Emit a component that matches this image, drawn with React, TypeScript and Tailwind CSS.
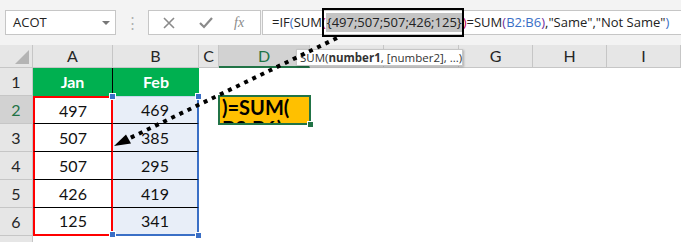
import React from 'react';

const cols = [
  { l: 'A', w: 80 },
  { l: 'B', w: 86 },
  { l: 'C', w: 20 },
  { l: 'D', w: 91 },
  { l: 'E', w: 74 },
  { l: 'F', w: 75 },
  { l: 'G', w: 74 },
  { l: 'H', w: 74 },
  { l: 'I', w: 74 },
];

const data = [
  [497, 469],
  [507, 385],
  [507, 295],
  [426, 419],
  [125, 341],
];

function Handle({ className }: { className: string }) {
  return <div className={`absolute w-[7px] h-[7px] bg-[#3a6fc6] border border-white z-10 ${className}`} />;
}

function Toolbar() {
  return (
    <div className="h-[45px] bg-[#f3f3f3] flex items-start pt-[10px] pl-[5px]" style={{ fontFamily: '"Open Sans", sans-serif' }}>
      <div className="w-[111px] h-[25px] bg-white border border-[#c6c6c6] flex items-center justify-between pl-[7px] pr-[5px] text-[13px] text-[#222]">
        <span>ACOT</span>
        <div className="w-0 h-0 border-l-[4px] border-r-[4px] border-t-[4px] border-l-transparent border-r-transparent border-t-[#777]" />
      </div>
      <div className="w-[32px] h-[25px] flex items-center justify-center text-[#b0b0b0] text-[15px]">⋮</div>
      <div className="w-[113px] h-[25px] bg-white border border-[#c6c6c6] flex items-center text-[#8a8a8a]">
        <svg width="14" height="14" viewBox="0 0 14 14" className="ml-[13px]">
          <path d="M2 2 L12 12 M12 2 L2 12" stroke="#8a8a8a" strokeWidth="1.6" />
        </svg>
        <svg width="16" height="14" viewBox="0 0 16 14" className="ml-[22px]">
          <path d="M2 7 L6 11 L14 2" stroke="#8a8a8a" strokeWidth="2.2" fill="none" />
        </svg>
        <span className="ml-[20px] text-[14px] italic" style={{ fontFamily: '"Liberation Serif", serif' }}>fx</span>
      </div>
      <div className="ml-[1px] flex-1 h-[25px] bg-white border border-[#c6c6c6] border-r-0 flex items-center pl-[9px] text-[13px] text-[#222] whitespace-nowrap">
        <span>=IF</span>
        <span className="text-[#3a6fc6]">(</span>
        <span>SUM</span>
        <span className="text-[#c00050]">(</span>
        <span className="bg-[#c4c4c4] px-[1px]">{'{497;507;507;426;125}'}</span>
        <span className="text-[#c00050]">)</span>
        <span>=SUM</span>
        <span className="text-[#7030a0]">(</span>
        <span className="text-[#3a6fc6]">B2:B6</span>
        <span className="text-[#7030a0]">)</span>
        <span>,"Same","Not Same"</span>
        <span className="text-[#3a6fc6]">)</span>
      </div>
    </div>
  );
}

function HeaderRow() {
  return (
    <div className="flex h-[23px]">
      <div className="w-[33px] shrink-0 bg-[#e6e6e6] border-r border-b border-[#c6c6c6] relative">
        <div className="absolute right-[3px] bottom-[3px] w-0 h-0" style={{ borderBottom: '14px solid #b4b4b4', borderLeft: '14px solid transparent' }} />
      </div>
      {cols.map((c) => (
        <div
          key={c.l}
          className={`shrink-0 flex items-center justify-center text-[16px] border-r ${
            c.l === 'D'
              ? 'bg-[#d2d2d2] text-[#217346] border-b-2 border-b-[#217346] border-r-[#c6c6c6]'
              : 'bg-[#e6e6e6] text-[#262626] border-b border-[#c6c6c6]'
          }`}
          style={{ width: c.w }}
        >
          {c.l}
        </div>
      ))}
    </div>
  );
}

export default function App() {
  return (
    <div className="w-[681px] h-[242px] relative overflow-hidden bg-white" style={{ fontFamily: 'Lato, "Noto Sans", sans-serif' }}>
      <Toolbar />
      <HeaderRow />

      {/* row 1 */}
      <div className="flex h-[28px]">
        <div className="w-[33px] shrink-0 bg-[#e6e6e6] border-r border-b border-[#c6c6c6] flex items-center justify-center text-[16px] text-[#262626]">1</div>
        <div className="w-[80px] shrink-0 bg-[#00b050] border-r border-black flex items-center justify-center text-white font-bold text-[16px]">Jan</div>
        <div className="w-[86px] shrink-0 bg-[#00b050] flex items-center justify-center text-white font-bold text-[16px]">Feb</div>
      </div>

      {data.map(([a, b], i) => {
        const first = i === 0;
        const last = i === data.length - 1;
        return (
          <div key={i} className="flex h-[28px]">
            <div
              className={`w-[33px] shrink-0 border-r border-b border-[#c6c6c6] flex items-center justify-center text-[16px] ${
                first ? 'bg-[#d2d2d2] text-[#217346]' : 'bg-[#e6e6e6] text-[#262626]'
              }`}
            >
              {i + 2}
            </div>
            <div
              className={`w-[80px] shrink-0 bg-white border-l-2 border-r-2 border-l-[#ff0000] border-r-[#ff0000] flex items-center justify-center text-[16px] text-[#111] ${
                first ? 'border-t-2 border-t-[#ff0000]' : ''
              } ${last ? 'border-b-2 border-b-[#ff0000]' : 'border-b border-b-black'}`}
            >
              {a}
            </div>
            <div
              className={`w-[86px] shrink-0 relative bg-[#e8eef8] border-r-2 border-r-[#3a6fc6] flex items-center justify-center text-[16px] text-[#111] ${
                last ? 'border-b-2 border-b-[#3a6fc6]' : 'border-b border-b-black'
              } ${first ? 'border-t border-t-[#c9d6ee]' : ''}`}
            >
              {b}
              {first && <Handle className="-left-[4px] -top-[4px]" />}
              {first && <Handle className="-right-[5px] -top-[4px]" />}
              {last && <Handle className="-left-[4px] -bottom-[4px]" />}
              {last && <Handle className="-right-[5px] -bottom-[5px]" />}
            </div>
            <div className="w-[20px] shrink-0" />
            {first && (
              <div className="w-[91px] shrink-0 relative">
                <div className="absolute -left-[1px] -top-[1px] w-[93px] h-[30px] bg-[#ffc000] border-2 border-[#217346] overflow-hidden pl-[2px] text-[20px] leading-[21px] font-bold text-black">
                  )=SUM(
                  <br />
                  B2:B6)
                </div>
                <div className="absolute -right-[4px] -bottom-[4px] w-[7px] h-[7px] bg-[#217346] border border-white z-10" />
              </div>
            )}
          </div>
        );
      })}

      {/* row 7 */}
      <div className="flex h-[28px]">
        <div className="w-[33px] shrink-0 bg-[#e6e6e6] border-r border-[#c6c6c6]" />
      </div>

      {/* annotation box on formula bar */}
      <div className="absolute left-[322px] top-[8px] w-[142px] h-[29px] border-2 border-black pointer-events-none" />

      {/* function tooltip */}
      <div
        className="absolute left-[296px] top-[49px] w-[167px] h-[17px] bg-white border border-[#c6c6c6] shadow-[1px_1px_2px_rgba(0,0,0,0.25)] flex items-center px-[3px] text-[11.5px] text-[#333] whitespace-nowrap"
        style={{ fontFamily: '"Open Sans", sans-serif' }}
      >
        SUM(<b>number1</b>, [number2], ...)
      </div>

      {/* dotted arrow */}
      <svg className="absolute left-0 top-0 pointer-events-none" width="681" height="242">
        <line x1="337" y1="38" x2="128" y2="139" stroke="black" strokeWidth="4" strokeDasharray="4 5" />
        <polygon points="114,146 131,143.5 126,134.5" fill="black" />
      </svg>
    </div>
  );
}
